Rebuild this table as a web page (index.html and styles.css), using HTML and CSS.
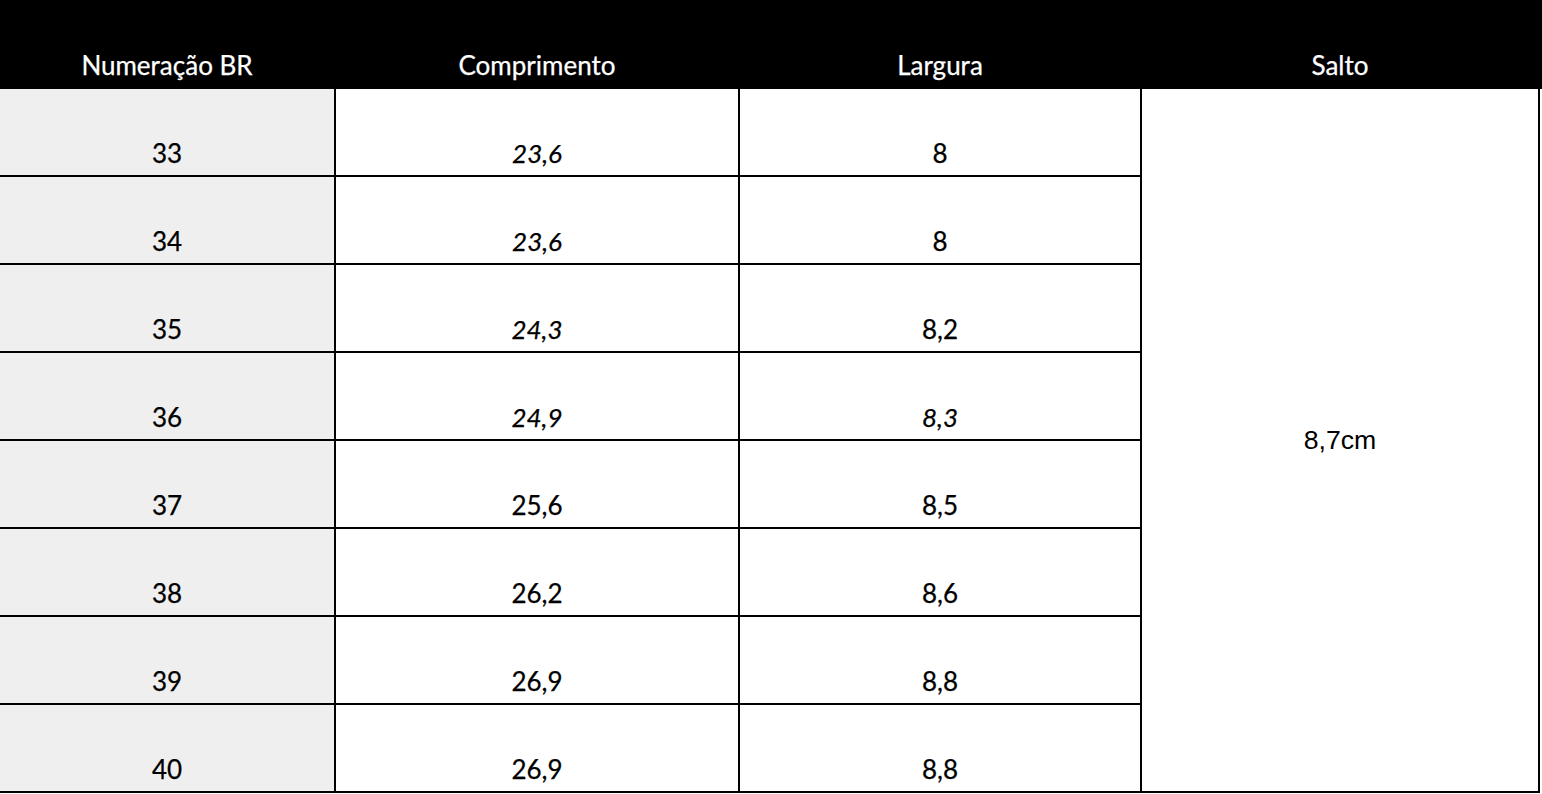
FILE: index.html
```html
<!DOCTYPE html>
<html lang="pt-BR">
<head>
<meta charset="utf-8">
<title>Tabela de medidas</title>
<link rel="stylesheet" href="styles.css">
</head>
<body>
<div class="sheet">
  <div class="head">
    <div class="hcell">Numeração BR</div>
    <div class="hcell">Comprimento</div>
    <div class="hcell">Largura</div>
    <div class="hcell">Salto</div>
  </div>
  <div class="grid">
    <div class="cell size">33</div><div class="cell it">23,6</div><div class="cell">8</div>
    <div class="cell heel">8,7cm</div>
    <div class="cell size">34</div><div class="cell it">23,6</div><div class="cell">8</div>
    <div class="cell size">35</div><div class="cell it">24,3</div><div class="cell">8,2</div>
    <div class="cell size">36</div><div class="cell it">24,9</div><div class="cell it">8,3</div>
    <div class="cell size">37</div><div class="cell">25,6</div><div class="cell">8,5</div>
    <div class="cell size">38</div><div class="cell">26,2</div><div class="cell">8,6</div>
    <div class="cell size">39</div><div class="cell">26,9</div><div class="cell">8,8</div>
    <div class="cell size">40</div><div class="cell">26,9</div><div class="cell">8,8</div>
  </div>
</div>
</body>
</html>
```
FILE: styles.css
```css
html, body {
  margin: 0;
  padding: 0;
  background: #ffffff;
}
.sheet {
  width: 1542px;
  font-family: "Lato", "Open Sans", sans-serif;
  font-size: 26px;
  line-height: 1;
  color: #000;
  -webkit-text-stroke: 0.25px currentColor;
}
.head {
  background: #000;
  height: 89px;
  display: grid;
  grid-template-columns: 336px 404px 402px 398px;
}
.hcell {
  color: #fff;
  display: flex;
  align-items: flex-end;
  justify-content: center;
  padding: 0 2px 11px 0;
}
.grid {
  display: grid;
  grid-template-columns: 336px 404px 402px 398px;
  grid-template-rows: repeat(8, 88px);
}
.cell {
  box-sizing: border-box;
  border-right: 2px solid #000;
  border-bottom: 2px solid #000;
  display: flex;
  align-items: flex-end;
  justify-content: center;
  padding-bottom: 9px;
}
.size {
  background: #efefef;
}
.it {
  font-style: italic;
}
.heel {
  grid-column: 4;
  grid-row: 1 / span 8;
  align-items: center;
  padding-bottom: 0;
  font-family: "Liberation Sans", Arial, sans-serif;
  font-size: 26.67px;
  -webkit-text-stroke: 0;
}
```
